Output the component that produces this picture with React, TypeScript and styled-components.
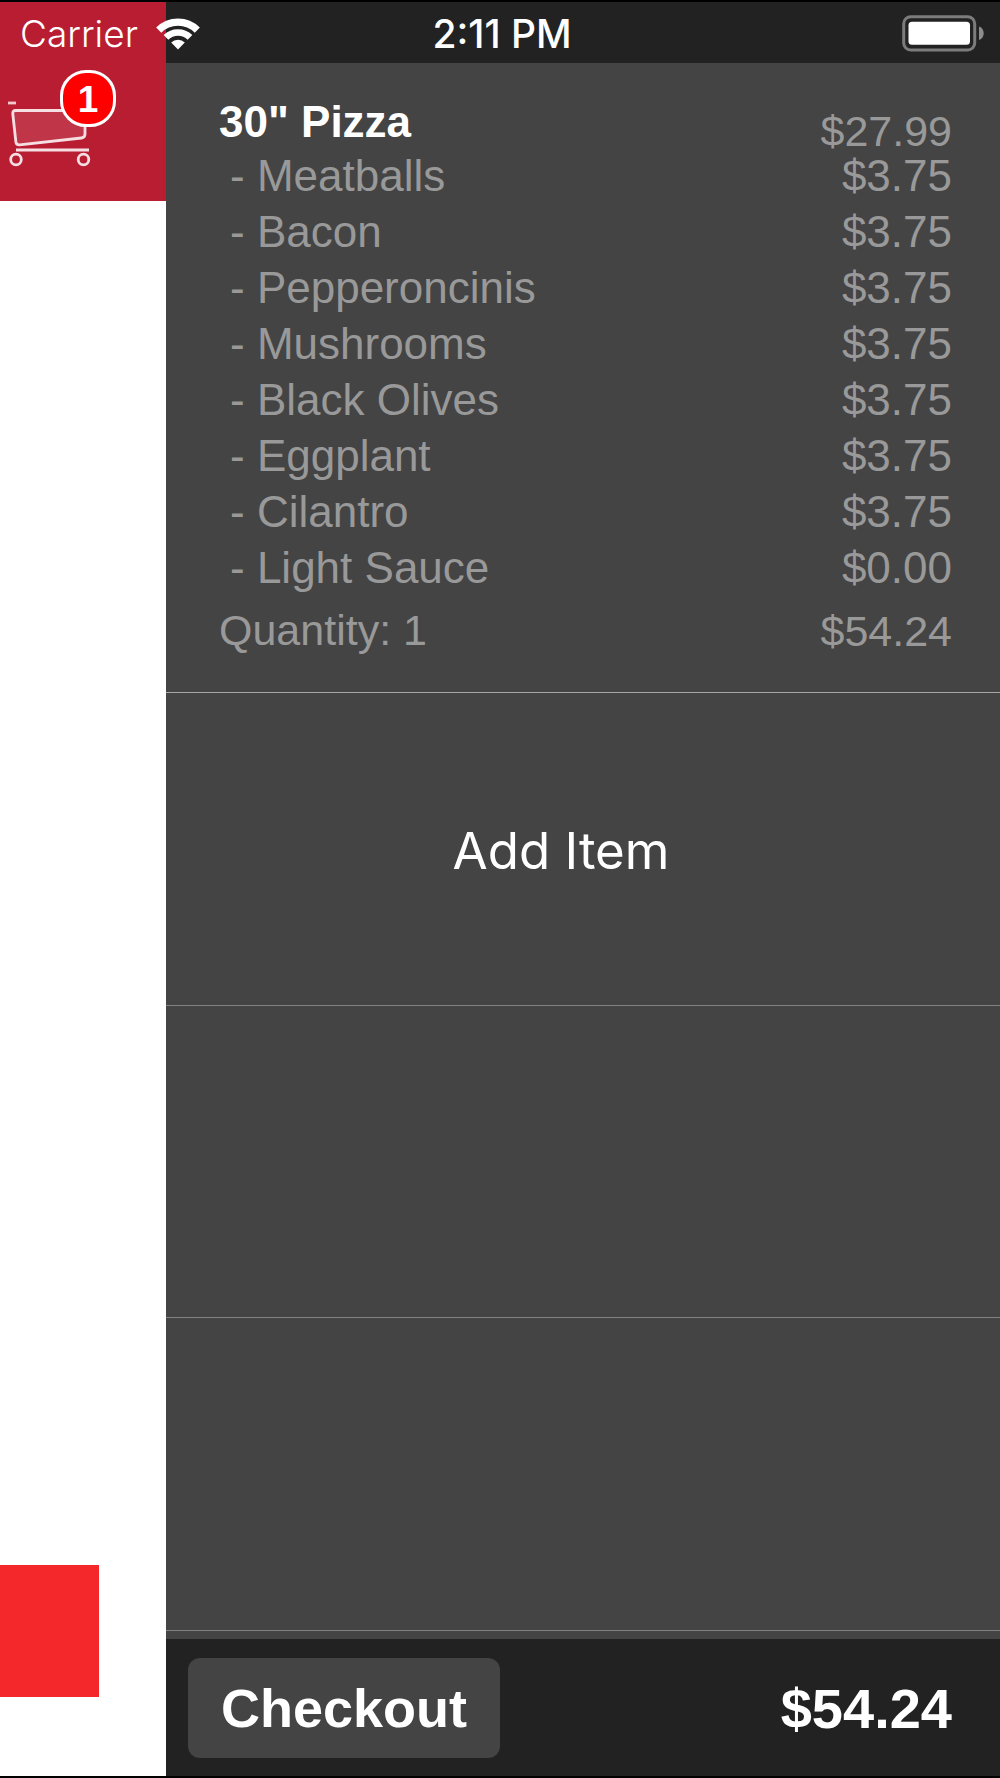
import React from "react";
import styled, { createGlobalStyle } from "styled-components";

const ARIAL = '"Liberation Sans", Arial, sans-serif';
const SYSTEM = 'Inter, "Liberation Sans", sans-serif';

const GlobalStyle = createGlobalStyle`
  *, *::before, *::after { box-sizing: border-box; }
  body { margin: 0; background: #000; }
  ul { list-style: none; margin: 0; padding: 0; }
  button { font: inherit; color: inherit; border: 0; margin: 0; padding: 0; background: none; cursor: pointer; }
`;

const Screen = styled.div`
  position: relative;
  display: flex;
  min-height: 100vh;
  border: solid #000;
  border-width: 2px 0;
  font-family: ${ARIAL};
  color: #fff;
`;

const StatusBar = styled.header`
  position: absolute;
  top: 0;
  left: 0;
  right: 0;
  height: 63px;
  padding: 0 16px 0 20px;
  display: grid;
  grid-template-columns: 1fr auto 1fr;
  align-items: center;
  font-family: ${SYSTEM};
  font-size: 37px;
  line-height: 60px;
`;

const StatusGroup = styled.div<{ $end?: boolean }>`
  display: flex;
  align-items: center;
  justify-content: ${(p) => (p.$end ? "flex-end" : "flex-start")};
  gap: 18px;
`;

const Carrier = styled.span`
  font-weight: 350;
`;

const Clock = styled.time`
  font-size: 39px;
  font-weight: 500;
`;

const PageEdge = styled.main`
  flex: 0 0 166px;
  display: flex;
  flex-direction: column;
  justify-content: space-between;
  background: #fff;
`;

const PageHeader = styled.div`
  height: 199px;
  padding: 68px 0 0 6px;
  background: #b91d32;
`;

const CartButton = styled.button`
  position: relative;
  display: block;
`;

const Badge = styled.span`
  position: absolute;
  top: 0;
  left: 54px;
  width: 56px;
  height: 57px;
  border: 3px solid #fff;
  border-radius: 26px;
  background: #f00;
  font-size: 37px;
  font-weight: 700;
  line-height: 53px;
  text-align: center;
`;

const PageButton = styled.button`
  width: 99px;
  height: 132px;
  margin-bottom: 79px;
  background: #f4282b;
`;

const CartPanel = styled.aside`
  flex: 1;
  display: flex;
  flex-direction: column;
  padding-top: 61px;
  background: #222;
`;

const CartRows = styled.ul`
  flex: 1;
  display: flex;
  flex-direction: column;
  padding-bottom: 8px;
  background: #444;
`;

const ItemRow = styled.li`
  padding: 39px 48px 37px 53px;
  border-bottom: 1px solid #a6a6a6;
  font-size: 43px;
  color: #999;
`;

const EmptyRow = styled.li`
  flex: 1;
  display: flex;
  min-height: 120px;
  border-bottom: 1px solid #828282;
`;

const Line = styled.div<{ $leading: number }>`
  display: flex;
  justify-content: space-between;
  height: 49px;
  line-height: ${(p) => p.$leading}px;
`;

const ItemName = styled.strong`
  color: #fff;
  font-size: 44px;
`;

const LinePrice = styled.span`
  align-self: flex-end;
`;

const Options = styled.ul`
  display: flex;
  flex-direction: column;
  gap: 8px;
  padding: 1px 0 14px 11px;
  font-size: 44px;
`;

const Option = styled.li`
  display: flex;
  justify-content: space-between;
  line-height: 48px;
`;

const AddItem = styled.button`
  flex: 1;
  padding: 3px 44px 0 0;
  font-family: ${SYSTEM};
  font-size: 51px;
`;

const Footer = styled.footer`
  display: flex;
  align-items: center;
  justify-content: space-between;
  padding: 19px 48px 18px 22px;
  font-weight: 700;
`;

const Checkout = styled.button`
  min-width: 312px;
  height: 100px;
  border-radius: 12px;
  background: #444;
  font-size: 54px;
`;

const Total = styled.output`
  font-size: 56px;
`;

const options = [
  { name: "Meatballs", price: "$3.75" },
  { name: "Bacon", price: "$3.75" },
  { name: "Pepperoncinis", price: "$3.75" },
  { name: "Mushrooms", price: "$3.75" },
  { name: "Black Olives", price: "$3.75" },
  { name: "Eggplant", price: "$3.75" },
  { name: "Cilantro", price: "$3.75" },
  { name: "Light Sauce", price: "$0.00" },
];

const WifiIcon = () => (
  <svg width="44" height="32" viewBox="0 0 44 32" fill="none" stroke="#fff" aria-hidden="true">
    <path d="M2.7 12.1A27.3 27.3 0 0 1 41.3 12.1" strokeWidth="7.2" />
    <path d="M10 19.4A17 17 0 0 1 34 19.4" strokeWidth="6.6" />
    <path d="M22 31.4L15.2 24.6A9.6 9.6 0 0 1 28.8 24.6Z" fill="#fff" stroke="none" />
  </svg>
);

const BatteryIcon = () => (
  <svg width="82" height="37" viewBox="0 0 82 37" aria-hidden="true">
    <rect x="1.7" y="1.7" width="71" height="33.4" rx="7" fill="none" stroke="#7c7c7c" strokeWidth="3" />
    <rect x="6.5" y="6.7" width="61.5" height="23" rx="3.5" fill="#fff" />
    <path d="M77 11.5C80 12.5 81.7 15 81.7 18.2C81.7 21.4 80 24 77 25Z" fill="#8c8c8c" />
  </svg>
);

const CartIcon = () => (
  <svg width="112" height="97" viewBox="0 0 112 97" fill="none" stroke="#f6dfe3" strokeWidth="2.8" aria-hidden="true">
    <path d="M2 33H10" stroke="#f0c8ce" />
    <path
      d="M9.5 40.5H76Q79 40.5 79 43.5V64Q79 67.6 75.5 68L13.5 74.8Q10.3 75 9.9 72L6.8 44Q6.5 40.5 9.5 40.5Z"
      fill="rgba(255,255,255,0.11)"
    />
    <path d="M10 80H83" />
    <circle cx="10" cy="89.5" r="5.3" />
    <circle cx="77.5" cy="89.5" r="5.3" />
  </svg>
);

export default function App() {
  return (
    <>
      <GlobalStyle />
      <Screen>
        <PageEdge>
          <PageHeader>
            <CartButton aria-label="Cart, 1 item">
              <CartIcon />
              <Badge>1</Badge>
            </CartButton>
          </PageHeader>
          <PageButton aria-label="Continue" />
        </PageEdge>

        <CartPanel>
          <CartRows>
            <ItemRow>
              <Line $leading={40}>
                <ItemName>30" Pizza</ItemName>
                <LinePrice>$27.99</LinePrice>
              </Line>
              <Options>
                {options.map((o) => (
                  <Option key={o.name}>
                    <span>- {o.name}</span>
                    <span>{o.price}</span>
                  </Option>
                ))}
              </Options>
              <Line $leading={48}>
                <span>Quantity: 1</span>
                <LinePrice>$54.24</LinePrice>
              </Line>
            </ItemRow>
            <EmptyRow>
              <AddItem>Add Item</AddItem>
            </EmptyRow>
            <EmptyRow />
            <EmptyRow />
          </CartRows>
          <Footer>
            <Checkout>Checkout</Checkout>
            <Total>$54.24</Total>
          </Footer>
        </CartPanel>

        <StatusBar>
          <StatusGroup>
            <Carrier>Carrier</Carrier>
            <WifiIcon />
          </StatusGroup>
          <Clock>2:11 PM</Clock>
          <StatusGroup $end>
            <BatteryIcon />
          </StatusGroup>
        </StatusBar>
      </Screen>
    </>
  );
}
